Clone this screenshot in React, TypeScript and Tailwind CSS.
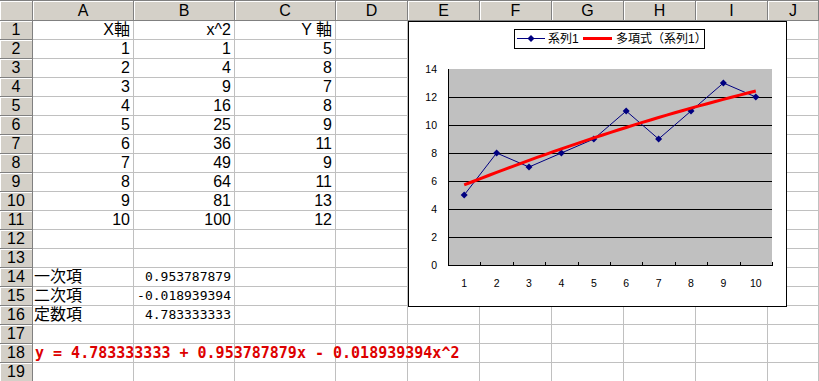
import React from "react";

const COLS = ["A", "B", "C", "D", "E", "F", "G", "H", "I", "J"];
const X = [1, 2, 3, 4, 5, 6, 7, 8, 9, 10];
const Y = [5, 8, 7, 8, 9, 11, 9, 11, 13, 12];

type Cell = { text: string; align?: "left" | "right"; kind?: "mono" | "cjk" };

// row number -> cells for A, B, C
const cells: Record<number, Cell[]> = {
  1: [
    { text: "X軸", align: "right" },
    { text: "x^2", align: "right" },
    { text: "Y 軸", align: "right" },
  ],
  14: [
    { text: "一次項", align: "left", kind: "cjk" },
    { text: "0.953787879", align: "right", kind: "mono" },
  ],
  15: [
    { text: "二次項", align: "left", kind: "cjk" },
    { text: "-0.018939394", align: "right", kind: "mono" },
  ],
  16: [
    { text: "定数項", align: "left", kind: "cjk" },
    { text: "4.783333333", align: "right", kind: "mono" },
  ],
};
X.forEach((x, i) => {
  cells[i + 2] = [
    { text: String(x), align: "right" },
    { text: String(x * x), align: "right" },
    { text: String(Y[i]), align: "right" },
  ];
});

const font = { fontFamily: '"Liberation Sans", "Noto Sans CJK JP", sans-serif' };

function Chart() {
  // local coords: chart box starts at page (408, 21)
  const px = (i: number) => 40 + 32.4 * (i - 0.5);
  const py = (v: number) => 244 - 14 * v;
  const trend = (t: number) => 4.783333333 + 0.953787879 * t - 0.018939394 * t * t;
  const trendPts: string[] = [];
  for (let t = 1; t <= 10.001; t += 0.25) trendPts.push(`${px(t)},${py(trend(t))}`);
  const dataPts = X.map((x, i) => `${px(x)},${py(Y[i])}`).join(" ");
  const diamond = (cx: number, cy: number, k: number) => (
    <polygon key={k} points={`${cx},${cy - 3.5} ${cx + 3.5},${cy} ${cx},${cy + 3.5} ${cx - 3.5},${cy}`} fill="#000080" />
  );

  return (
    <svg width={380} height={287} className="absolute left-[408px] top-[21px] z-10" style={font}>
      <rect x={0.5} y={0.5} width={378} height={285} fill="#ffffff" stroke="#000000" />

      {/* legend */}
      <rect x={106.5} y={8.5} width={190} height={19} fill="#ffffff" stroke="#000000" />
      <line x1={109} y1={17.5} x2={137} y2={17.5} stroke="#000080" />
      {diamond(123, 17.5, 0)}
      <text x={140} y={22} fontSize={12}>系列1</text>
      <line x1={175} y1={17.5} x2={204} y2={17.5} stroke="#ff0000" strokeWidth={3} />
      <text x={208} y={22} fontSize={12}>多項式（系列1）</text>

      {/* plot area */}
      <rect x={40} y={48} width={324} height={196} fill="#c0c0c0" />
      {[1, 2, 3, 4, 5, 6].map((k) => (
        <line key={k} x1={40} y1={48 + 28 * k + 0.5} x2={364} y2={48 + 28 * k + 0.5} stroke="#000000" />
      ))}
      <line x1={40} y1={244.5} x2={364} y2={244.5} stroke="#000000" />
      <line x1={40.5} y1={48} x2={40.5} y2={245} stroke="#000000" />
      {X.map((i) => (
        <line key={i} x1={Math.round(40 + 32.4 * i) + 0.5} y1={241} x2={Math.round(40 + 32.4 * i) + 0.5} y2={245} stroke="#000000" />
      ))}
      {[0, 2, 4, 6, 8, 10, 12, 14].map((v) => (
        <text key={v} x={29} y={py(v) + 4} fontSize={10.5} textAnchor="end">{v}</text>
      ))}
      {X.map((i) => (
        <text key={i} x={px(i)} y={266} fontSize={10.5} textAnchor="middle">{i}</text>
      ))}

      <polyline points={dataPts} fill="none" stroke="#000080" strokeWidth={1} />
      {X.map((x, i) => diamond(px(x), py(Y[i]), i + 1))}
      <polyline points={trendPts.join(" ")} fill="none" stroke="#ff0000" strokeWidth={3} strokeLinejoin="round" />
    </svg>
  );
}

export default function App() {
  const rows = Array.from({ length: 19 }, (_, i) => i + 1);
  return (
    <div className="relative w-[819px] h-[381px] overflow-hidden bg-white" style={font}>
      <div className="grid grid-cols-[33px_101px_101px_101px_72px_72px_72px_72px_72px_72px_1fr]">
        <div className="h-[21px] bg-[#d4d0c8] border-t border-r border-b border-[#808080] shadow-[inset_1px_1px_0_#ffffff]" />
        {COLS.map((c) => (
          <div
            key={c}
            className="h-[21px] bg-[#d4d0c8] border-t border-r border-b border-[#808080] shadow-[inset_1px_1px_0_#ffffff] flex items-center justify-center text-[16px] leading-[19px] text-black"
          >
            {c}
          </div>
        ))}

        {rows.map((r) => (
          <React.Fragment key={r}>
            <div className="h-[19px] bg-[#d4d0c8] border-r border-b border-[#808080] shadow-[inset_1px_1px_0_#ffffff] flex items-center justify-center text-[16px] leading-[18px] text-black">
              {r}
            </div>
            {COLS.map((c, ci) => {
              const cell = cells[r]?.[ci];
              if (r === 18 && ci === 0) {
                return (
                  <div key={c} className="relative z-20 h-[19px] border-r border-b border-[#c0c0c0] overflow-visible">
                    <span
                      className="absolute left-[2px] top-0 whitespace-nowrap text-[15px] leading-[19px] font-bold text-[#dd0000]"
                      style={{ fontFamily: '"DejaVu Sans Mono", monospace' }}
                    >
                      y = 4.783333333 + 0.953787879x - 0.018939394x^2
                    </span>
                  </div>
                );
              }
              return (
                <div
                  key={c}
                  className={`h-[19px] border-r border-b border-[#c0c0c0] flex items-center overflow-hidden whitespace-nowrap text-black ${
                    cell?.align === "left" ? "justify-start pl-[1px]" : "justify-end pr-[3px]"
                  } ${cell?.kind === "mono" ? "text-[13px] leading-[18px]" : "text-[16px] leading-[18px]"}`}
                  style={cell?.kind === "mono" ? { fontFamily: '"DejaVu Sans Mono", "Noto Sans CJK JP", monospace' } : undefined}
                >
                  {cell?.text}
                </div>
              );
            })}
          </React.Fragment>
        ))}
      </div>
      <Chart />
    </div>
  );
}
